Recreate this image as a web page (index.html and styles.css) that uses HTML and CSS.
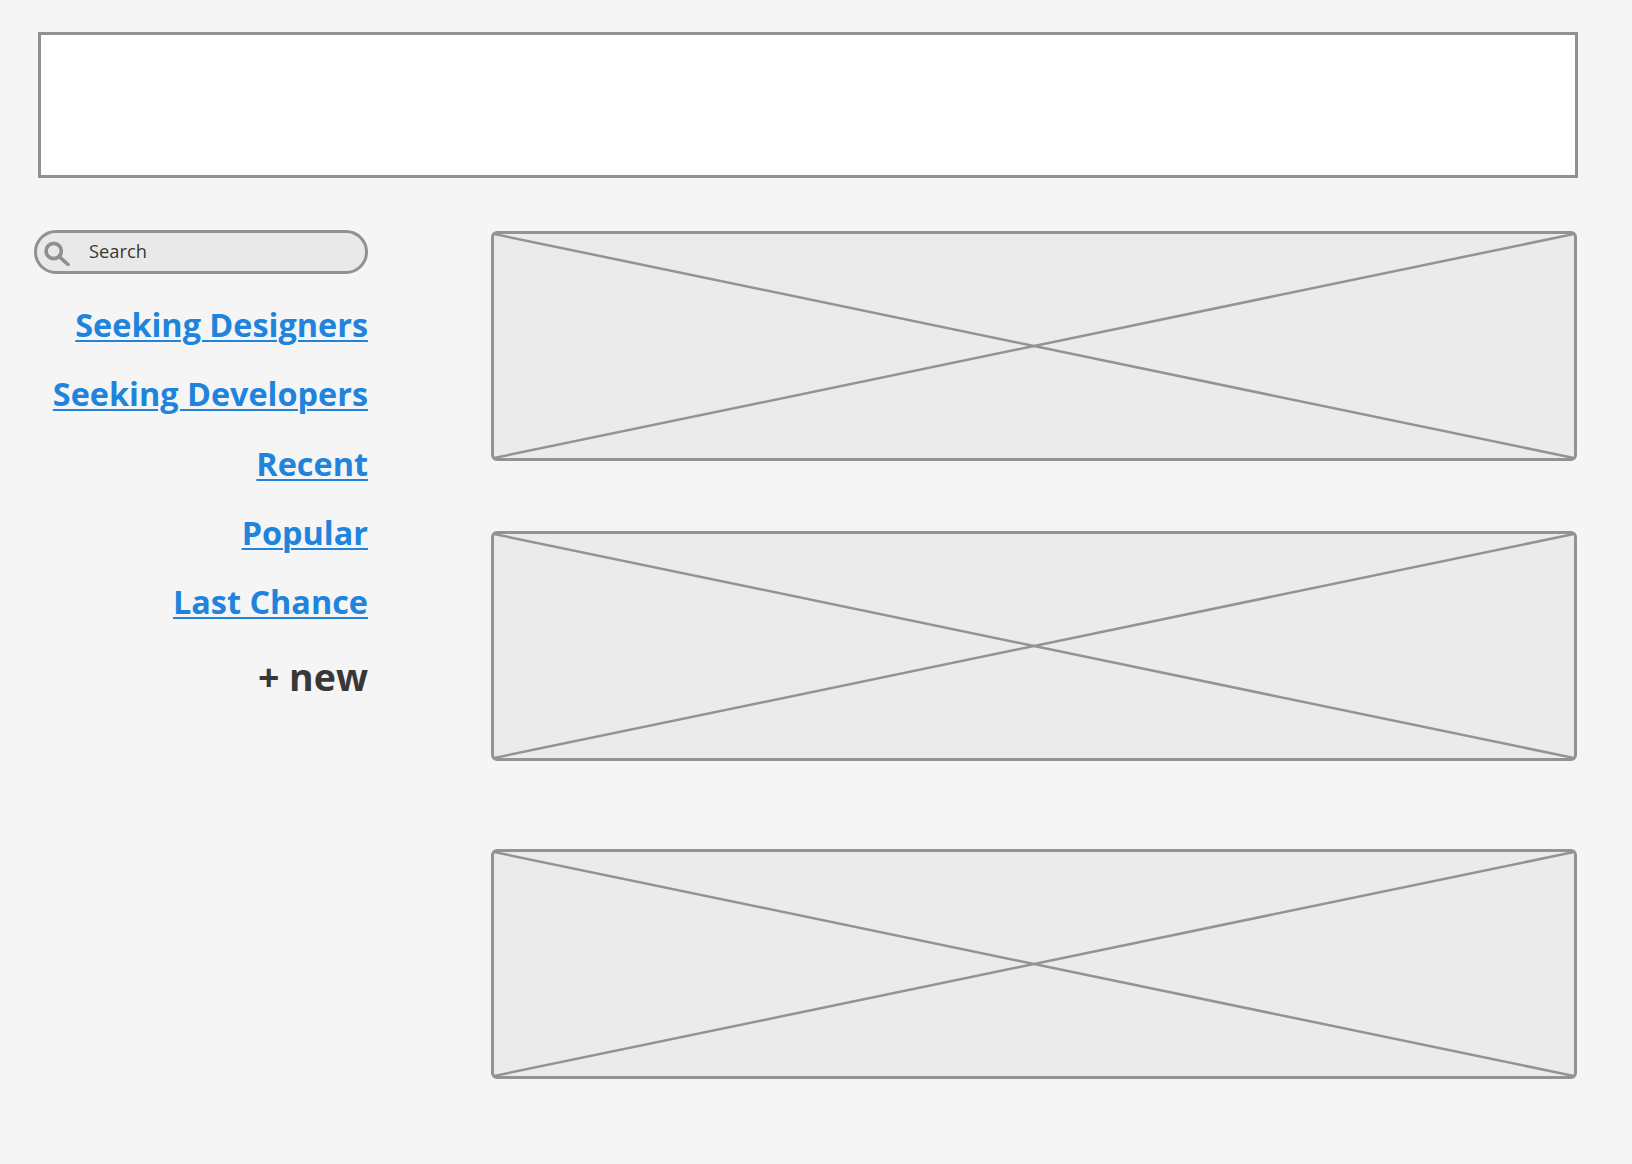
FILE: index.html
```html
<!DOCTYPE html>
<html lang="en">
<head>
  <meta charset="UTF-8" />
  <title>Wireframe</title>
  <link rel="stylesheet" href="styles.css">
</head>
<body>

  <div class="banner"></div>

  <div class="content">
    <div class="sidebar">
      <div class="search">
        <svg class="search-icon" viewBox="0 0 28 28" width="28" height="28">
          <circle cx="10.7" cy="13" r="7.6" />
          <path d="M16.5 18.8 L25 26.5" />
        </svg>
        <span class="search-text">Search</span>
      </div>
      <div class="links">
        <a href="#">Seeking Designers</a>
        <a href="#">Seeking Developers</a>
        <a href="#">Recent</a>
        <a href="#">Popular</a>
        <a href="#">Last Chance</a>
      </div>
      <div class="new">+ new</div>
    </div>

    <div class="main">
      <div class="placeholder">
        <svg viewBox="0 0 100 100" preserveAspectRatio="none">
          <line x1="0" y1="0" x2="100" y2="100" />
          <line x1="100" y1="0" x2="0" y2="100" />
        </svg>
      </div>
      <div class="placeholder">
        <svg viewBox="0 0 100 100" preserveAspectRatio="none">
          <line x1="0" y1="0" x2="100" y2="100" />
          <line x1="100" y1="0" x2="0" y2="100" />
        </svg>
      </div>
      <div class="placeholder last">
        <svg viewBox="0 0 100 100" preserveAspectRatio="none">
          <line x1="0" y1="0" x2="100" y2="100" />
          <line x1="100" y1="0" x2="0" y2="100" />
        </svg>
      </div>
    </div>
  </div>

</body>
</html>
```

FILE: styles.css
```css
body {
  margin: 0;
  height: 1164px;
  overflow: hidden;
  background-color: #f5f5f5;
  font-family: 'Open Sans', sans-serif;
  color: #383838;
}

.banner {
  box-sizing: border-box;
  height: 146px;
  margin: 32px 54px 0 38px;
  background-color: #fff;
  border: 3px solid #919191;
}

.content {
  display: flex;
  margin-top: 52px;
  padding-left: 34px;
}

.sidebar {
  width: 334px;
  text-align: right;
}

.search {
  box-sizing: border-box;
  display: flex;
  align-items: center;
  height: 44px;
  padding-left: 6px;
  background-color: #e9e9e9;
  border: 3px solid #919191;
  border-radius: 22px;
}

.search-icon {
  flex-shrink: 0;
  fill: none;
  stroke: #8f8f8f;
  stroke-width: 3.6;
  stroke-linecap: round;
}

.search-text {
  margin-left: 18px;
  margin-bottom: 4px;
  font-size: 18.3px;
}

.links {
  display: flex;
  flex-direction: column;
  align-items: flex-end;
  margin-top: 30px;
  gap: 29.3px;
}

.links a {
  font-size: 32.4px;
  line-height: 40px;
  font-weight: 700;
  color: #2084dc;
  text-decoration-thickness: 2px;
  text-underline-offset: 3px;
}

.new {
  margin-top: 34px;
  font-size: 37.5px;
  line-height: 44px;
  font-weight: 700;
}

.main {
  flex: 1;
  margin-left: 123px;
  margin-right: 55px;
  padding-top: 1px;
}

.placeholder {
  box-sizing: border-box;
  height: 230px;
  margin-bottom: 70px;
  background-color: #ebebeb;
  border: 3px solid #939393;
  border-radius: 6px;
}

.placeholder + .placeholder.last {
  margin-top: 88px;
}

.placeholder svg {
  display: block;
  width: 100%;
  height: 100%;
}

.placeholder line {
  stroke: #939393;
  stroke-width: 2.5;
  vector-effect: non-scaling-stroke;
}
```
